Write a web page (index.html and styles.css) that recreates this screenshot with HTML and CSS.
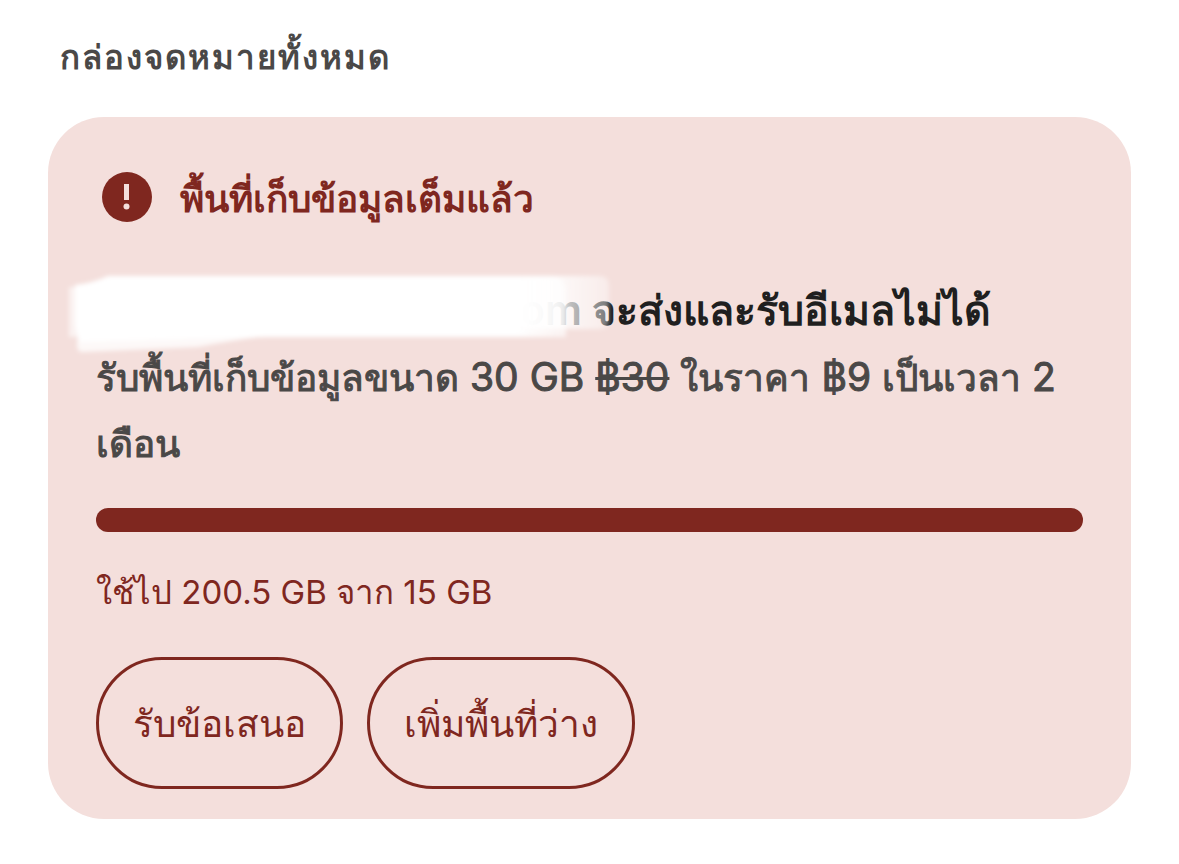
FILE: index.html
```html
<!DOCTYPE html>
<html lang="th">
<head>
<meta charset="utf-8">
<meta name="viewport" content="width=device-width, initial-scale=1">
<title>กล่องจดหมายทั้งหมด</title>
<link rel="stylesheet" href="styles.css">
</head>
<body>
<main class="inbox">
  <h1 class="inbox-title">กล่องจดหมายทั้งหมด</h1>
  <section class="card">
    <header class="alert">
      <svg class="alert-icon" viewBox="0 0 50 50" aria-hidden="true">
        <circle cx="25" cy="25" r="25" fill="#7f271f"/>
        <rect x="22" y="12" width="5" height="16" fill="#f4dfdc"/>
        <circle cx="24.500" cy="34.500" r="3" fill="#f4dfdc"/>
      </svg>
      <h2 class="alert-title">พื้นที่เก็บข้อมูลเต็มแล้ว</h2>
    </header>
    <div class="message">
      <p class="headline">om จะส่งและรับอีเมลไม่ได้</p>
      <p class="offer">รับพื้นที่เก็บข้อมูลขนาด<span class="figure"> 30 GB <s>฿30</s> </span>ในราคา<span class="figure"> ฿9 </span>เป็นเวลา<span class="figure"> 2 </span>เดือน</p>
      <svg class="smudge" viewBox="0 0 548 90" aria-hidden="true">
        <defs>
          <linearGradient id="fade" gradientUnits="userSpaceOnUse" x1="440" y1="0" x2="541" y2="0">
            <stop offset="0" stop-color="#fff"/>
            <stop offset=".45" stop-color="#fff" stop-opacity=".85"/>
            <stop offset="1" stop-color="#fff" stop-opacity=".4"/>
          </linearGradient>
          <linearGradient id="core" gradientUnits="userSpaceOnUse" x1="450" y1="0" x2="500" y2="0">
            <stop offset="0" stop-color="#fff"/>
            <stop offset="1" stop-color="#fff" stop-opacity=".6"/>
          </linearGradient>
          <filter id="soft"><feGaussianBlur stdDeviation="2"/></filter>
        </defs>
        <g filter="url(#soft)">
          <path d="M1 16H20V66H1Z" fill="#fff" opacity=".6"/>
          <path d="M10 60H240Q180 66 130 76L14 81Q9 81 9 74Z" fill="#fff" opacity=".8"/>
          <path d="M430 5H530Q541 5 541 14V50Q541 58 530 58H430Z" fill="url(#fade)"/>
          <path d="M7 14Q25 12 40 5H485Q498 8 498 20V66H200L12 71Q7 60 7 50Z" fill="url(#core)"/>
        </g>
      </svg>
    </div>
    <div class="meter" role="meter" aria-label="GB" aria-valuemin="0" aria-valuemax="15" aria-valuenow="15"></div>
    <p class="usage">ใช้ไป 200.5 GB จาก 15 GB</p>
    <div class="actions">
      <button class="action" type="button">รับข้อเสนอ</button>
      <button class="action" type="button">เพิ่มพื้นที่ว่าง</button>
    </div>
  </section>
</main>
</body>
</html>
```

FILE: styles.css
```css
* { box-sizing: border-box; }
body { margin: 0; background: #fff; font-family: Inter, "Noto Sans", sans-serif; }
h1, h2, p { margin: 0; }
.inbox { padding: 33px 48px 44px; }
.inbox-title { padding-left: 12px; margin-bottom: 36px; font-size: 33px; line-height: 48px; font-weight: 600; color: #4a4847; letter-spacing: 2px; }
.card { padding: 48px 48px 30px; background: #f4dfdc; border-radius: 56px; }
.alert { display: flex; gap: 28px; align-items: center; padding-left: 6px; color: #7f271f; }
.alert-icon { width: 50px; height: 50px; }
.alert-title { padding-top: 4px; font-size: 37px; line-height: 60px; font-weight: 600; }
.message { position: relative; padding-top: 48px; }
.headline { padding-left: 424px; font-size: 41px; line-height: 66px; font-weight: 600; color: #201f1f; }
.offer { padding-top: 2px; font-size: 37px; line-height: 66px; color: #4a4847; -webkit-text-stroke: 1px #4a4847; }
.figure { font-size: 39px; line-height: 48px; }
.offer s { text-decoration-thickness: 3px; }
.smudge { position: absolute; left: -28px; top: 42px; width: 548px; height: 90px; overflow: visible; }
.meter { margin-top: 31px; height: 24px; border-radius: 12px; background: #7f271f; }
.usage { margin-top: 36px; font-size: 33px; line-height: 48px; color: #7f271f; }
.actions { display: flex; gap: 24px; margin-top: 41px; }
.action { padding: 0 34px; height: 132px; border: 3px solid #7f271f; border-radius: 66px; background: none; color: #7f271f; font: 500 37px Inter, "Noto Sans", sans-serif; }
```
